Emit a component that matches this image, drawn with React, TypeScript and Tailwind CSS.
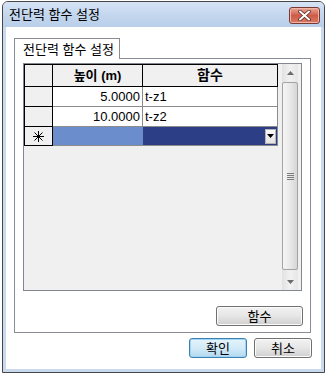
import React from "react";

function Triangle({ up, color = "#555" }: { up?: boolean; color?: string }) {
  return (
    <svg width="7" height="4" viewBox="0 0 7 4">
      {up ? (
        <path d="M0 4 L3.5 0 L7 4 Z" fill={color} />
      ) : (
        <path d="M0 0 L7 0 L3.5 4 Z" fill={color} />
      )}
    </svg>
  );
}

function Star() {
  return (
    <svg width="11" height="11" viewBox="0 0 11 11">
      <g stroke="#000" strokeWidth="1">
        <line x1="5.5" y1="0" x2="5.5" y2="11" />
        <line x1="0" y1="5.5" x2="11" y2="5.5" />
        <line x1="1.5" y1="1.5" x2="9.5" y2="9.5" />
        <line x1="9.5" y1="1.5" x2="1.5" y2="9.5" />
      </g>
    </svg>
  );
}

function Button({ label, w, primary }: { label: string; w: string; primary?: boolean }) {
  return (
    <div
      className={`${w} h-[20px] rounded-[3px] border flex items-center justify-center text-[13px] text-black leading-none ${
        primary
          ? "border-[#3c7fb1] bg-gradient-to-b from-[#e5f4fc] via-[#d2ebf8] to-[#b3d8ef] shadow-[inset_0_0_0_1px_#9fd5f3]"
          : "border-[#707070] bg-gradient-to-b from-[#f2f2f2] via-[#e6e6e6] to-[#cfcfcf] shadow-[inset_0_0_0_1px_#fcfcfc]"
      }`}
    >
      {label}
    </div>
  );
}

export default function App() {
  return (
    <div className="w-[327px] h-[375px] bg-white pl-[2px] pt-[1px] font-['Liberation_Sans','Noto_Sans_CJK_KR',sans-serif]">
      <div className="w-[323px] h-[372px] flex flex-col border border-[#474747] rounded-t-[6px] overflow-hidden bg-[#c9daef]">
        {/* Title bar */}
        <div className="h-[25px] flex items-start justify-between bg-gradient-to-b from-[#d6e4f5] via-[#c4d7ee] to-[#b8cee9]">
          <div className="h-full flex items-center pl-[6px] text-[13px] text-black leading-none">전단력 함수 설정</div>
          <div className="mt-[5px] mr-[4px] w-[31px] h-[17px] rounded-[3px] border border-[#7a3a33] bg-gradient-to-b from-[#e9a899] via-[#cf5a48] to-[#d97a63] flex items-center justify-center shadow-[inset_0_0_0_1px_#f0b7a9]">
            <svg width="13" height="11" viewBox="0 0 13 11">
              <path d="M2 1.5 L11 9.5 M11 1.5 L2 9.5" stroke="#5a2a24" strokeWidth="3.6" strokeLinecap="round" />
              <path d="M2 1.5 L11 9.5 M11 1.5 L2 9.5" stroke="#ffffff" strokeWidth="2" strokeLinecap="round" />
            </svg>
          </div>
        </div>
        {/* Body frame */}
        <div className="flex-1 px-[3px] pb-[3px] flex flex-col">
          <div className="flex-1 bg-white flex flex-col">
            {/* Tab */}
            <div className="mt-[11px] ml-[8px] w-[106px] h-[21px] -mb-px relative z-10 bg-white border-t border-x border-[#898c95] flex items-center pl-[8px] text-[13px] text-black leading-none">
              전단력 함수 설정
            </div>
            {/* Panel */}
            <div className="ml-[8px] w-[297px] h-[275px] border border-[#898c95] flex flex-col px-[8px] pt-[4px]">
              {/* Grid */}
              <div className="w-[279px] h-[228px] border border-[#828790] bg-[#f0f0f0] flex">
                <div className="w-[254px] flex flex-col text-[13px] text-black">
                  {/* header */}
                  <div className="h-[23px] flex">
                    <div className="w-[29px] border border-black bg-[#f0f0f0]" />
                    <div className="w-[90px] border-y border-r border-black bg-[#f0f0f0] flex items-center justify-center font-bold text-[13px]">
                      높이 (m)
                    </div>
                    <div className="w-[135px] border-y border-r border-black bg-[#f0f0f0] flex items-center justify-center font-bold text-[14px]">
                      함수
                    </div>
                  </div>
                  {/* rows */}
                  {[
                    ["5.0000", "t-z1"],
                    ["10.0000", "t-z2"],
                  ].map(([h, f]) => (
                    <div key={h} className="h-[20px] flex">
                      <div className="w-[29px] border-x border-b border-black bg-[#f0f0f0]" />
                      <div className="w-[90px] border-r border-b border-[#8c8c8c] bg-white flex items-center justify-end pr-[2px]">
                        {h}
                      </div>
                      <div className="w-[135px] border-r border-b border-[#8c8c8c] bg-white flex items-center pl-[2px]">
                        {f}
                      </div>
                    </div>
                  ))}
                  {/* new row */}
                  <div className="h-[19px] flex">
                    <div className="w-[29px] border-x border-b border-black bg-[#f0f0f0] flex items-center justify-center">
                      <Star />
                    </div>
                    <div className="w-[90px] border-b border-[#8c8c8c] bg-[#6b8dcc]" />
                    <div className="w-[135px] border-r border-b border-[#8c8c8c] bg-[#2c3e86] flex items-center justify-end pr-[1px]">
                      <div className="w-[11px] h-[15px] bg-gradient-to-b from-[#fbfbfb] to-[#e2e2e2] border border-[#b5b5b5] flex items-center justify-center">
                        <Triangle color="#000" />
                      </div>
                    </div>
                  </div>
                </div>
                {/* Scrollbar */}
                <div className="ml-[4px] w-[16px] flex flex-col bg-gradient-to-r from-[#e2e2e2] via-[#f1f1f1] to-[#e6e6e6]">
                  <div className="h-[18px] flex items-center justify-center">
                    <Triangle up color="#6b6b6b" />
                  </div>
                  <div className="h-[188px] rounded-[2px] border border-[#a3a3a3] bg-gradient-to-r from-[#f5f5f5] via-[#e9e9e9] to-[#d6d6d6] flex items-center justify-center">
                    <div className="flex flex-col gap-[1px]">
                      <div className="w-[7px] h-px bg-[#7d7d7d]" />
                      <div className="w-[7px] h-px bg-[#7d7d7d]" />
                      <div className="w-[7px] h-px bg-[#7d7d7d]" />
                      <div className="w-[7px] h-px bg-[#7d7d7d]" />
                    </div>
                  </div>
                  <div className="flex-1" />
                  <div className="h-[16px] flex items-center justify-center">
                    <Triangle color="#6b6b6b" />
                  </div>
                </div>
              </div>
              <div className="mt-[15px] self-end mr-[-1px]">
                <Button label="함수" w="w-[87px]" />
              </div>
            </div>
            {/* Bottom buttons */}
            <div className="mt-[5px] flex justify-end gap-[7px] mr-[9px]">
              <Button label="확인" w="w-[58px]" primary />
              <Button label="취소" w="w-[58px]" />
            </div>
          </div>
        </div>
      </div>
    </div>
  );
}
